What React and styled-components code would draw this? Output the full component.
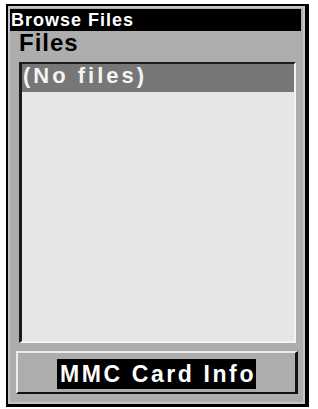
import React from "react";
import styled, { createGlobalStyle } from "styled-components";

const Global = createGlobalStyle`
  html, body { margin: 0; padding: 0; background: #ffffff; }
  body { font-family: "Liberation Sans", Arial, sans-serif; }
`;

const Frame = styled.div`
  box-sizing: border-box;
  margin: 4px 0 0 6px;
  width: 303px;
  height: 403px;
  background: #adadad;
  border-style: solid;
  border-color: #000;
  border-width: 2px 4px 3px 2px;
  box-shadow: inset 0 0 0 2px #c4c4c4;
  padding: 3px 4px 10px 2px;
  display: flex;
  flex-direction: column;
`;

const TitleBar = styled.div`
  height: 22px;
  background: #000;
  color: #fff;
  font-family: "Liberation Sans", Arial, sans-serif;
  font-weight: 700;
  font-size: 18px;
  line-height: 22px;
  letter-spacing: 1px;
  padding-left: 1px;
  white-space: nowrap;
`;

const Heading = styled.div`
  font-family: "Liberation Sans", Arial, sans-serif;
  font-weight: 700;
  font-size: 24px;
  line-height: 23px;
  letter-spacing: 1px;
  color: #000;
  margin-left: 9px;
`;

const FileList = styled.div`
  box-sizing: border-box;
  margin: 8px 0 0 9px;
  width: 277px;
  height: 281px;
  background: #e6e6e6;
  border-style: solid;
  border-width: 2px 2px 2px 3px;
  border-color: #1a1a1a #f4f4f4 #f4f4f4 #1a1a1a;
  display: flex;
  flex-direction: column;
`;

const FileRow = styled.div`
  height: 28px;
  box-sizing: border-box;
  background: ${(p) => (p.$selected ? "#777777" : "transparent")};
  color: ${(p) => (p.$selected ? "#f4f4f4" : "#000")};
  font-family: "Liberation Sans", Arial, sans-serif;
  font-weight: 700;
  font-size: 22px;
  line-height: 24px;
  padding: 0 0 4px 1px;
  letter-spacing: 3px;
  white-space: nowrap;
`;

const Button = styled.div`
  box-sizing: border-box;
  margin: 8px 0 0 6px;
  width: 282px;
  height: 43px;
  background: #adadad;
  border-style: solid;
  border-width: 2px 3px 2px 2px;
  border-color: #ececec #111 #111 #ececec;
  display: flex;
  align-items: center;
  justify-content: center;
`;

const ButtonLabel = styled.span`
  background: #000;
  color: #fff;
  font-family: "Liberation Sans", Arial, sans-serif;
  font-weight: 700;
  font-size: 23px;
  line-height: 30px;
  height: 30px;
  letter-spacing: 2.6px;
  padding: 0 0 0 3px;
  white-space: nowrap;
  margin-top: 2px;
`;

export default function App() {
  return (
    <>
      <Global />
      <Frame>
        <TitleBar>Browse Files</TitleBar>
        <Heading>Files</Heading>
        <FileList>
          <FileRow $selected>(No files)</FileRow>
        </FileList>
        <Button>
          <ButtonLabel>MMC Card Info</ButtonLabel>
        </Button>
      </Frame>
    </>
  );
}
